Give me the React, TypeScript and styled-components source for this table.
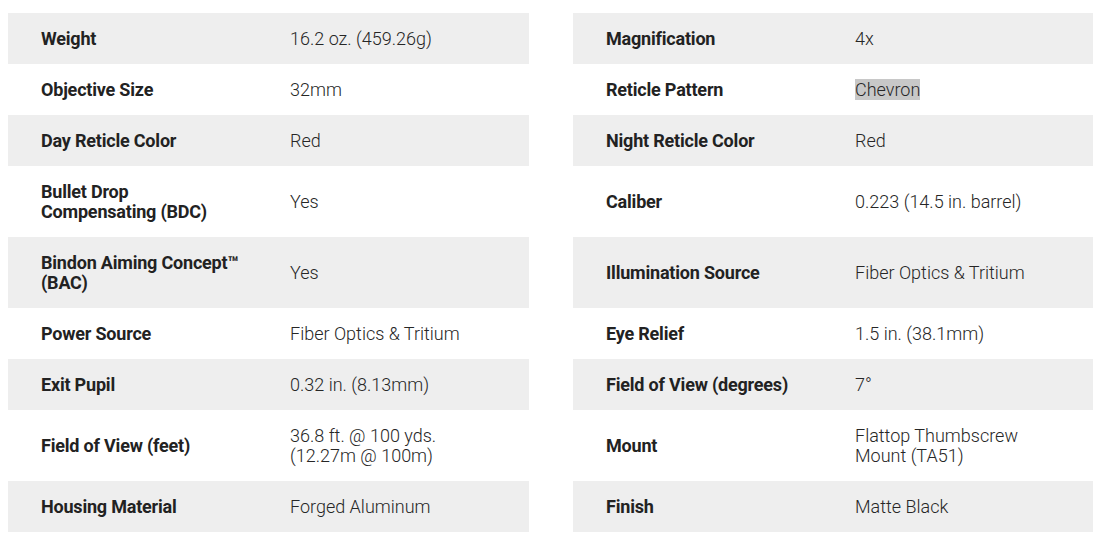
import styled, { createGlobalStyle } from 'styled-components';

const GlobalStyle = createGlobalStyle`
  body {
    margin: 0;
    background: #fff;
    font-family: Roboto, 'Liberation Sans', Arial, sans-serif;
  }
`;

const Sheet = styled.div`
  display: flex;
  flex-direction: column;
  padding: 13px 0 0 8px;
`;

const Row = styled.div`
  display: grid;
  grid-template-columns: 521px 520px;
  column-gap: 44px;
`;

const Cell = styled.div<{ $shaded: boolean }>`
  display: grid;
  grid-template-columns: 282px 1fr;
  align-items: center;
  padding: 16px 0 15px;
  background: ${(p) => (p.$shaded ? '#eeeeee' : '#ffffff')};
  font-size: 18px;
  line-height: 20px;
`;

const Label = styled.div`
  padding: 0 50px 0 33px;
  font-weight: 700;
  color: #222;
  letter-spacing: -0.2px;
`;

const Value = styled.div`
  padding-right: 33px;
  font-weight: 300;
  color: #262626;
`;

const Highlight = styled.span`
  background: #c8c8c8;
`;

type Spec = { label: string; value: string; highlight?: boolean };

const rows: [Spec, Spec][] = [
  [
    { label: 'Weight', value: '16.2 oz. (459.26g)' },
    { label: 'Magnification', value: '4x' },
  ],
  [
    { label: 'Objective Size', value: '32mm' },
    { label: 'Reticle Pattern', value: 'Chevron', highlight: true },
  ],
  [
    { label: 'Day Reticle Color', value: 'Red' },
    { label: 'Night Reticle Color', value: 'Red' },
  ],
  [
    { label: 'Bullet Drop Compensating (BDC)', value: 'Yes' },
    { label: 'Caliber', value: '0.223 (14.5 in. barrel)' },
  ],
  [
    { label: 'Bindon Aiming Concept™ (BAC)', value: 'Yes' },
    { label: 'Illumination Source', value: 'Fiber Optics & Tritium' },
  ],
  [
    { label: 'Power Source', value: 'Fiber Optics & Tritium' },
    { label: 'Eye Relief', value: '1.5 in. (38.1mm)' },
  ],
  [
    { label: 'Exit Pupil', value: '0.32 in. (8.13mm)' },
    { label: 'Field of View (degrees)', value: '7°' },
  ],
  [
    { label: 'Field of View (feet)', value: '36.8 ft. @ 100 yds. (12.27m @ 100m)' },
    { label: 'Mount', value: 'Flattop Thumbscrew Mount (TA51)' },
  ],
  [
    { label: 'Housing Material', value: 'Forged Aluminum' },
    { label: 'Finish', value: 'Matte Black' },
  ],
];

function SpecCell({ spec, shaded }: { spec: Spec; shaded: boolean }) {
  return (
    <Cell $shaded={shaded}>
      <Label>{spec.label}</Label>
      <Value>{spec.highlight ? <Highlight>{spec.value}</Highlight> : spec.value}</Value>
    </Cell>
  );
}

export default function App() {
  return (
    <>
      <GlobalStyle />
      <Sheet>
        {rows.map(([a, b], i) => (
          <Row key={a.label}>
            <SpecCell spec={a} shaded={i % 2 === 0} />
            <SpecCell spec={b} shaded={i % 2 === 0} />
          </Row>
        ))}
      </Sheet>
    </>
  );
}
